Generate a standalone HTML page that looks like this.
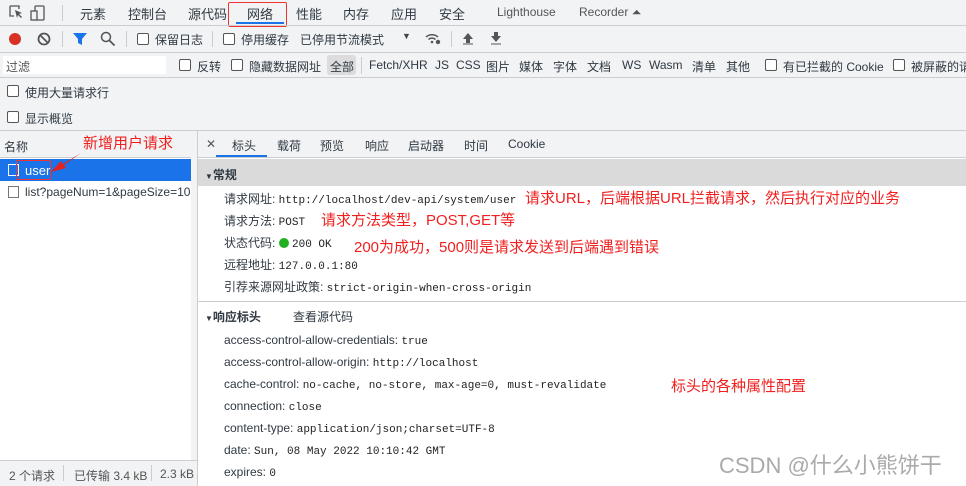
<!DOCTYPE html>
<html><head><meta charset="utf-8"><style>
*{margin:0;padding:0;box-sizing:border-box}
body{width:966px;height:486px;overflow:hidden;background:#f1f3f4;font-family:"Liberation Sans","Noto Sans CJK SC",sans-serif;font-size:12px;color:#303942;position:relative}
.a{position:absolute;white-space:nowrap}
.cb{position:absolute;width:12px;height:12px;border:1px solid #555;border-radius:2px;background:#fff}
.m{font-family:"Liberation Mono","DejaVu Sans Mono",monospace;font-size:11px;color:#222}
.red{color:#f02020;font-size:15px}
.hl{position:absolute;left:0;right:0;height:1px;background:#cbcdd1}
</style></head><body>
<svg class="a" style="left:8px;top:4px" width="44" height="18"><path d="M2 2h9v3M2 2v10h4" fill="none" stroke="#555" stroke-width="1.3"/><path d="M7 6l7 3-3 1 3 3-1 1-3-3-1 3z" fill="#555"/><rect x="27" y="2" width="9" height="14" rx="1" fill="none" stroke="#555" stroke-width="1.3"/><rect x="23" y="7" width="6" height="9" fill="#f1f3f4" stroke="#555" stroke-width="1.3"/></svg>
<div class="a" style="left:62px;top:5px;width:1px;height:16px;background:#ccc"></div>
<div class="a" style="left:80px;top:4px;font-size:13px">元素</div>
<div class="a" style="left:128px;top:4px;font-size:13px">控制台</div>
<div class="a" style="left:188px;top:4px;font-size:13px">源代码</div>
<div class="a" style="left:228px;top:2px;width:59px;height:25px;border:1px solid #e33;border-radius:2px"></div>
<div class="a" style="left:247px;top:4px;font-size:13px">网络</div>
<div class="a" style="left:236px;top:22px;width:48px;height:2px;background:#1a73e8"></div>
<div class="a" style="left:296px;top:4px;font-size:13px">性能</div>
<div class="a" style="left:343px;top:4px;font-size:13px">内存</div>
<div class="a" style="left:391px;top:4px;font-size:13px">应用</div>
<div class="a" style="left:439px;top:4px;font-size:13px">安全</div>
<div class="a" style="left:497px;top:5px;font-size:12px;color:#555">Lighthouse</div>
<div class="a" style="left:579px;top:5px;font-size:12px;color:#555">Recorder ⏶</div>
<div class="hl" style="top:25px"></div>
<div class="a" style="left:9px;top:33px;width:12px;height:12px;border-radius:50%;background:#d93025"></div>
<svg class="a" style="left:37px;top:32px" width="14" height="14"><circle cx="7" cy="7" r="5.5" fill="none" stroke="#555" stroke-width="1.8"/><path d="M3 3l8 8" stroke="#555" stroke-width="1.8"/></svg>
<div class="a" style="left:62px;top:31px;width:1px;height:16px;background:#ccc"></div>
<svg class="a" style="left:72px;top:32px" width="16" height="14"><path d="M1 1h14l-5 6v6l-4-2V7z" fill="#1a73e8"/></svg>
<svg class="a" style="left:100px;top:31px" width="16" height="16"><circle cx="6" cy="6" r="4.5" fill="none" stroke="#555" stroke-width="1.5"/><path d="M9.5 9.5l5 5" stroke="#555" stroke-width="1.8"/></svg>
<div class="a" style="left:126px;top:31px;width:1px;height:16px;background:#ccc"></div>
<div class="cb" style="left:137px;top:33px"></div><div class="a" style="left:155px;top:31px;font-size:12px">保留日志</div>
<div class="a" style="left:212px;top:31px;width:1px;height:16px;background:#ccc"></div>
<div class="cb" style="left:223px;top:33px"></div><div class="a" style="left:241px;top:31px">停用缓存</div>
<div class="a" style="left:300px;top:31px">已停用节流模式</div>
<div class="a" style="left:402px;top:31px;font-size:9px;color:#444">▼</div>
<svg class="a" style="left:424px;top:31px" width="18" height="14"><path d="M2 6a9 9 0 0 1 12 0M4.5 8.5a5 5 0 0 1 7 0" fill="none" stroke="#555" stroke-width="1.5"/><circle cx="8" cy="11" r="1.3" fill="#555"/><circle cx="14" cy="11" r="2.2" fill="#555"/></svg>
<div class="a" style="left:451px;top:31px;width:1px;height:16px;background:#ccc"></div>
<svg class="a" style="left:462px;top:32px" width="12" height="13"><path d="M6 1l5 6H8v4H4V7H1z" fill="#555"/><path d="M1 12h10" stroke="#555"/></svg>
<svg class="a" style="left:490px;top:32px" width="12" height="13"><path d="M6 10l5-6H8V0H4v4H1z" fill="#555"/><path d="M1 12h10" stroke="#555"/></svg>
<div class="hl" style="top:52px"></div>
<div class="a" style="left:3px;top:56px;width:163px;height:18px;background:#fff"></div>
<div class="a" style="left:6px;top:58px;color:#555">过滤</div>
<div class="cb" style="left:179px;top:59px"></div><div class="a" style="left:197px;top:58px">反转</div>
<div class="cb" style="left:231px;top:59px"></div><div class="a" style="left:249px;top:58px">隐藏数据网址</div>
<div class="a" style="left:327px;top:55px;width:29px;height:20px;background:#dcdcdc;border-radius:3px"></div>
<div class="a" style="left:330px;top:58px">全部</div>
<div class="a" style="left:361px;top:57px;width:1px;height:17px;background:#ccc"></div>
<div class="a" style="left:369px;top:58px">Fetch/XHR</div>
<div class="a" style="left:435px;top:58px">JS</div>
<div class="a" style="left:456px;top:58px">CSS</div>
<div class="a" style="left:486px;top:58px">图片</div>
<div class="a" style="left:519px;top:58px">媒体</div>
<div class="a" style="left:553px;top:58px">字体</div>
<div class="a" style="left:587px;top:58px">文档</div>
<div class="a" style="left:622px;top:58px">WS</div>
<div class="a" style="left:649px;top:58px">Wasm</div>
<div class="a" style="left:692px;top:58px">清单</div>
<div class="a" style="left:726px;top:58px">其他</div>
<div class="cb" style="left:765px;top:59px"></div><div class="a" style="left:783px;top:58px">有已拦截的 Cookie</div>
<div class="cb" style="left:893px;top:59px"></div><div class="a" style="left:911px;top:58px">被屏蔽的请求</div>
<div class="hl" style="top:77px"></div>
<div class="cb" style="left:7px;top:85px"></div><div class="a" style="left:25px;top:84px">使用大量请求行</div>
<div class="cb" style="left:7px;top:111px"></div><div class="a" style="left:25px;top:110px">显示概览</div>
<div class="hl" style="top:130px"></div>
<div class="a" style="left:0;top:131px;width:197px;height:330px;background:#fff"></div>
<div class="a" style="left:0;top:131px;width:197px;height:27px;background:#f1f3f4;border-bottom:1px solid #cbcdd1"></div>
<div class="a" style="left:4px;top:138px">名称</div>
<div class="a red" style="left:83px;top:132px">新增用户请求</div>
<div class="a" style="left:0;top:159px;width:191px;height:22px;background:#1a73e8"></div>
<div class="a" style="left:8px;top:164px;width:11px;height:12px;border:1px solid #fff;background:#1a73e8"></div>
<div class="a" style="left:16px;top:160px;width:35px;height:20px;border:1px solid #e33;border-radius:2px"></div>
<div class="a" style="left:25px;top:163px;color:#fff;font-size:13px">user</div>
<svg class="a" style="left:48px;top:150px" width="36" height="26"><path d="M33 3L16 15l2 3L3 22l10-11 2 3z" fill="#e52020"/></svg>
<div class="a" style="left:8px;top:186px;width:11px;height:12px;border:1px solid #777"></div>
<div class="a" style="left:25px;top:185px">list?pageNum=1&amp;pageSize=10</div>
<div class="a" style="left:191px;top:131px;width:7px;height:330px;background:#f1f3f4"></div>
<div class="a" style="left:0;top:460px;width:198px;height:1px;background:#cbcdd1"></div>
<div class="a" style="left:9px;top:467px;color:#555">2 个请求</div>
<div class="a" style="left:63px;top:465px;width:1px;height:16px;background:#ccc"></div>
<div class="a" style="left:74px;top:467px;color:#555">已传输 3.4 kB</div>
<div class="a" style="left:151px;top:465px;width:1px;height:16px;background:#ccc"></div>
<div class="a" style="left:160px;top:467px;color:#555">2.3 kB</div>
<div class="a" style="left:197px;top:131px;width:1px;height:355px;background:#cbcdd1"></div>
<div class="a" style="left:198px;top:131px;width:768px;height:355px;background:#fff"></div>
<div class="a" style="left:198px;top:131px;width:768px;height:27px;background:#f1f3f4;border-bottom:1px solid #cbcdd1"></div>
<div class="a" style="left:206px;top:137px;color:#555">✕</div>
<div class="a" style="left:232px;top:137px">标头</div>
<div class="a" style="left:216px;top:155px;width:51px;height:2px;background:#1a73e8"></div>
<div class="a" style="left:277px;top:137px">载荷</div>
<div class="a" style="left:320px;top:137px">预览</div>
<div class="a" style="left:365px;top:137px">响应</div>
<div class="a" style="left:408px;top:137px">启动器</div>
<div class="a" style="left:464px;top:137px">时间</div>
<div class="a" style="left:508px;top:137px">Cookie</div>
<div class="a" style="left:198px;top:159px;width:768px;height:27px;background:#dadada"></div>
<div class="a" style="left:205px;top:166px;font-weight:bold"><span style="font-size:8px">▼</span>常规</div>
<div class="a" style="left:224px;top:190px">请求网址: <span class="m">http://localhost/dev-api/system/user</span></div>
<div class="a red" style="left:525px;top:187px">请求URL，后端根据URL拦截请求，然后执行对应的业务</div>
<div class="a" style="left:224px;top:212px">请求方法: <span class="m">POST</span></div>
<div class="a red" style="left:321px;top:209px">请求方法类型，POST,GET等</div>
<div class="a" style="left:224px;top:234px">状态代码: <span style="display:inline-block;width:10px;height:10px;border-radius:50%;background:#22b022;vertical-align:-1px"></span> <span class="m">200 OK</span></div>
<div class="a red" style="left:354px;top:236px">200为成功，500则是请求发送到后端遇到错误</div>
<div class="a" style="left:224px;top:256px">远程地址: <span class="m">127.0.0.1:80</span></div>
<div class="a" style="left:224px;top:278px">引荐来源网址政策: <span class="m">strict-origin-when-cross-origin</span></div>
<div class="a" style="left:198px;top:301px;width:768px;height:1px;background:#cbcdd1"></div>
<div class="a" style="left:205px;top:308px;font-weight:bold"><span style="font-size:8px">▼</span>响应标头</div>
<div class="a" style="left:293px;top:308px">查看源代码</div>
<div class="a" style="left:224px;top:333px">access-control-allow-credentials: <span class="m">true</span></div>
<div class="a" style="left:224px;top:355px">access-control-allow-origin: <span class="m">http://localhost</span></div>
<div class="a" style="left:224px;top:377px">cache-control: <span class="m">no-cache, no-store, max-age=0, must-revalidate</span></div>
<div class="a red" style="left:671px;top:375px">标头的各种属性配置</div>
<div class="a" style="left:224px;top:399px">connection: <span class="m">close</span></div>
<div class="a" style="left:224px;top:421px">content-type: <span class="m">application/json;charset=UTF-8</span></div>
<div class="a" style="left:224px;top:443px">date: <span class="m">Sun, 08 May 2022 10:10:42 GMT</span></div>
<div class="a" style="left:224px;top:465px">expires: <span class="m">0</span></div>
<div class="a" style="left:719px;top:448px;font-size:22px;color:#aaa">CSDN @什么小熊饼干</div>
</body></html>
